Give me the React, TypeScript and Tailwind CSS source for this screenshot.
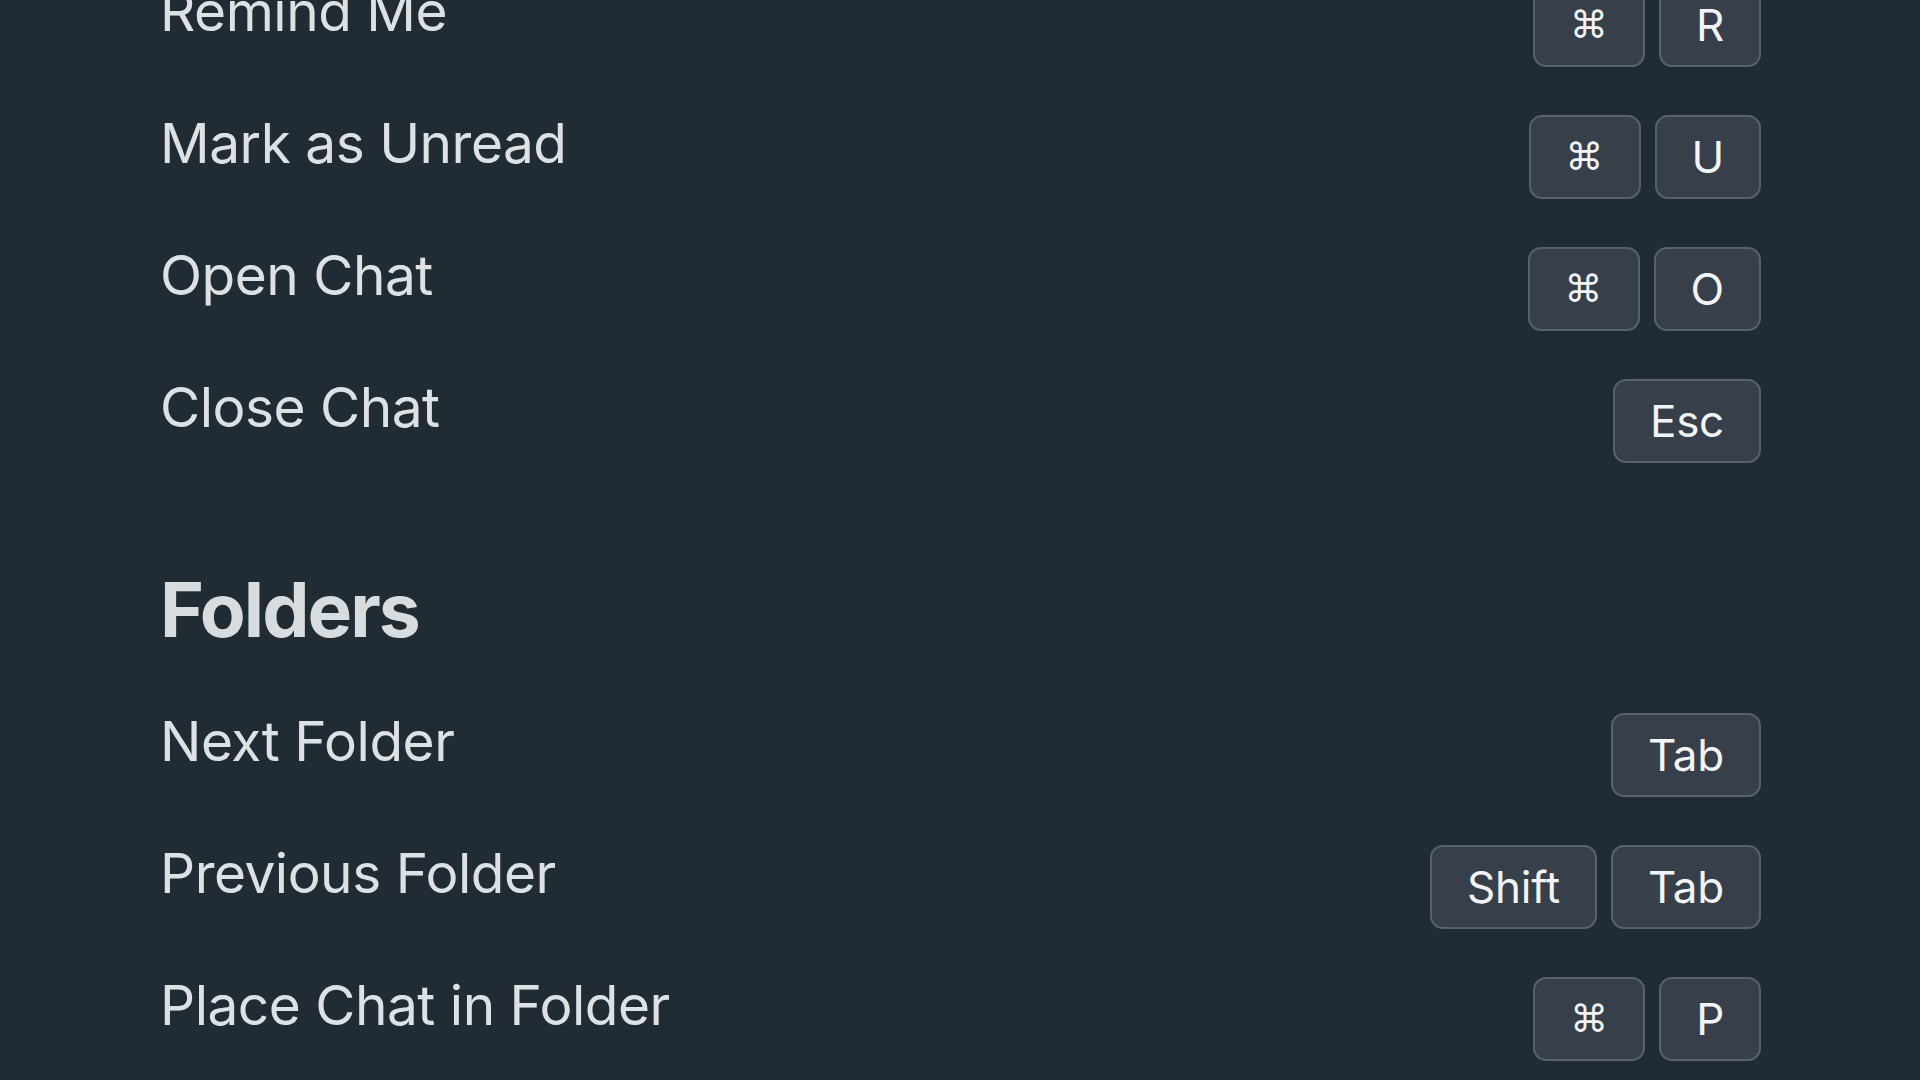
import React from "react";

type Shortcut = {
  label: string;
  keys: string[];
};

const chatShortcuts: Shortcut[] = [
  { label: "Remind Me", keys: ["⌘", "R"] },
  { label: "Mark as Unread", keys: ["⌘", "U"] },
  { label: "Open Chat", keys: ["⌘", "O"] },
  { label: "Close Chat", keys: ["Esc"] },
];

const folderShortcuts: Shortcut[] = [
  { label: "Next Folder", keys: ["Tab"] },
  { label: "Previous Folder", keys: ["Shift", "Tab"] },
  { label: "Place Chat in Folder", keys: ["⌘", "P"] },
];

const Key = ({ children }: { children: string }) => {
  const isCmd = children === "⌘";
  return (
    <kbd
      className={
        "flex h-[84px] items-center justify-center rounded-[13px] border-2 border-[#59626b] bg-[#37404a] leading-none font-normal text-[#f1f3f4] " +
        (isCmd
          ? "w-[112px] font-['DejaVu_Sans',sans-serif] text-[38px]"
          : "px-[35px] font-['Inter',sans-serif] text-[44px] tracking-[-0.25px]")
      }
    >
      {children}
    </kbd>
  );
};

const ShortcutRow = ({ label, keys }: Shortcut) => (
  <div className="flex h-[132px] items-start justify-between">
    <span className="mt-[1px] text-[55px] leading-none tracking-[-0.5px] text-[#dde1e4]">
      {label}
    </span>
    <div className="flex gap-[14px]">
      {keys.map((k, i) => (
        <Key key={i}>{k}</Key>
      ))}
    </div>
  </div>
);

export default function App() {
  return (
    <div className="h-[1080px] w-[1920px] overflow-hidden bg-[#212b34] font-['Inter',sans-serif]">
      <div className="-mt-[17px] pl-[160px] pr-[159px]">
        {/* Chats */}
        {chatShortcuts.map((s) => (
          <ShortcutRow key={s.label} {...s} />
        ))}

        {/* Folders */}
        <h2 className="mt-[61px] mb-[66px] text-[75px] leading-none font-bold tracking-[-2px] text-[#d8dcdf]">
          Folders
        </h2>
        {folderShortcuts.map((s) => (
          <ShortcutRow key={s.label} {...s} />
        ))}
      </div>
    </div>
  );
}
